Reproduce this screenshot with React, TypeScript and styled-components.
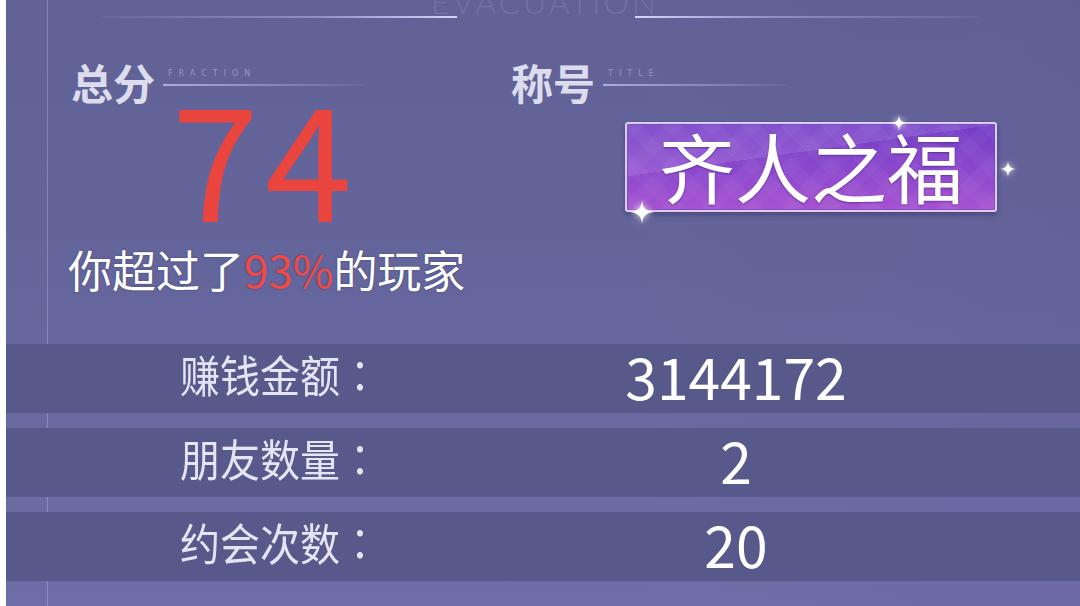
import React from "react";
import styled, { createGlobalStyle } from "styled-components";

const GlobalStyle = createGlobalStyle`
  html, body {
    margin: 0;
    padding: 0;
    background: #ffffff;
  }
  * {
    box-sizing: border-box;
  }
`;

const CJK = `"Noto Sans CJK SC", "Noto Sans", sans-serif`;

type Stat = {
  label: string;
  value: string;
};

const stats: Stat[] = [
  { label: "赚钱金额", value: "3144172" },
  { label: "朋友数量", value: "2" },
  { label: "约会次数", value: "20" },
];

const Page = styled.div`
  display: flex;
  width: 1080px;
  height: 606px;
  overflow: hidden;
  background: #ffffff;
`;

const Panel = styled.main`
  margin-left: 6px;
  flex: 1;
  display: flex;
  flex-direction: column;
  overflow: hidden;
  background:
    linear-gradient(
      90deg,
      transparent 41px,
      rgba(195, 195, 240, 0.34) 41px,
      rgba(195, 195, 240, 0.34) 42px,
      transparent 42px
    ),
    linear-gradient(90deg, rgba(255, 255, 255, 0.015) 0 60%, rgba(120, 90, 160, 0.12) 100%),
    linear-gradient(180deg, #5e5f93 0%, #62639a 45%, #6b6ca6 100%);
`;

const Header = styled.header`
  height: 30px;
  display: flex;
  align-items: flex-start;
  padding-left: 94px;
`;

const HeaderLine = styled.span<{ $side: "left" | "right" }>`
  position: relative;
  z-index: 1;
  width: ${(p) => (p.$side === "left" ? "357px" : "345px")};
  height: 2px;
  margin-top: 16px;
  background: ${(p) =>
    p.$side === "left"
      ? "linear-gradient(90deg, rgba(200, 200, 245, 0.05), rgba(200, 200, 245, 0.45) 60%, #d4d4fb)"
      : "linear-gradient(90deg, #d4d4fb, rgba(200, 200, 245, 0.45) 40%, rgba(200, 200, 245, 0.05))"};
`;

const HeaderTitle = styled.div`
  width: 234px;
  margin: -14px -27px 0 -29px;
  text-align: center;
  font-family: Lato, "Liberation Sans", sans-serif;
  font-weight: 300;
  font-size: 32px;
  line-height: 32px;
  letter-spacing: 3px;
  color: rgba(255, 255, 255, 0.13);
`;

const TopSection = styled.section`
  height: 314px;
  display: flex;
  padding: 31px 0 0 62px;
`;

const Column = styled.div<{ $width?: number; $offset?: number }>`
  display: flex;
  flex-direction: column;
  width: ${(p) => (p.$width ? `${p.$width}px` : "auto")};
  margin-left: ${(p) => p.$offset ?? 0}px;
`;

const Heading = styled.div`
  display: flex;
  align-items: flex-start;
`;

const HeadingText = styled.h2`
  margin: 0;
  padding-left: 3px;
  font-family: ${CJK};
  font-weight: 700;
  font-size: 42px;
  line-height: 42px;
  color: #dcdcee;
`;

const Tag = styled.div`
  display: flex;
  flex-direction: column;
  margin-left: 8px;
  padding-top: 8px;
`;

const TagText = styled.span`
  padding-left: 5px;
  font-family: "DejaVu Sans", sans-serif;
  font-size: 8px;
  line-height: 10px;
  letter-spacing: 6px;
  color: rgba(225, 225, 248, 0.42);
`;

const TagLine = styled.span<{ $width: number }>`
  width: ${(p) => p.$width}px;
  height: 2px;
  margin-top: 5px;
  background: linear-gradient(90deg, rgba(205, 205, 245, 0.7), rgba(205, 205, 245, 0.05));
`;

const Score = styled.div`
  padding-left: 6px;
  text-align: center;
  font-family: ${CJK};
  font-size: 157px;
  line-height: 101px;
  letter-spacing: 6px;
  color: #ea443f;
`;

const Rank = styled.p`
  margin: 39px 0 0;
  font-family: ${CJK};
  font-size: 44px;
  line-height: 52px;
  color: #ffffff;
  white-space: nowrap;
  text-shadow: 0 0 2px rgba(40, 40, 90, 0.6);
`;

const Highlight = styled.span`
  color: #ef4a46;
`;

const Badge = styled.div`
  position: relative;
  width: 372px;
  height: 90px;
  margin: 19px 0 0 117px;
  display: flex;
  align-items: center;
  justify-content: center;
  border: 2px solid #d9cdf4;
  border-radius: 3px;
  box-shadow: 0 3px 5px rgba(30, 20, 70, 0.35), inset 0 0 0 1px rgba(120, 70, 190, 0.6);
  background:
    linear-gradient(172deg, rgba(255, 255, 255, 0.1) 0 38%, rgba(255, 255, 255, 0) 38%),
    repeating-linear-gradient(45deg, rgba(255, 255, 255, 0.03) 0 14px, transparent 14px 28px),
    repeating-linear-gradient(-45deg, rgba(255, 255, 255, 0.03) 0 14px, transparent 14px 28px),
    linear-gradient(180deg, #733dc6 0%, #8947cc 50%, #a652d0 100%);
`;

const BadgeText = styled.span`
  padding-bottom: 4px;
  font-family: ${CJK};
  font-size: 76px;
  line-height: 1;
  color: #ffffff;
  text-shadow: 0 1px 2px rgba(60, 20, 110, 0.5);
`;

const Sparkle = styled.svg<{ $x: number; $y: number; $size: number }>`
  position: absolute;
  left: ${(p) => p.$x - p.$size / 2}px;
  top: ${(p) => p.$y - p.$size / 2}px;
  width: ${(p) => p.$size}px;
  height: ${(p) => p.$size}px;
  filter: drop-shadow(0 0 3px rgba(255, 255, 255, 0.9));
`;

const StatList = styled.section`
  display: flex;
  flex-direction: column;
  gap: 15px;
`;

const StatRow = styled.div`
  height: 69px;
  display: grid;
  grid-template-columns: 374px 1fr;
  align-items: center;
  background: #58598b;
`;

const StatLabel = styled.span`
  padding-bottom: 8px;
  text-align: right;
  font-family: ${CJK};
  font-size: 40px;
  line-height: 1;
  color: #e4e4f2;
  transform: scaleY(1.1);
`;

const Colon = styled.span`
  font-family: "Noto Sans CJK TC", sans-serif;
`;

const StatValue = styled.span`
  padding: 0 0 7px 12px;
  text-align: center;
  font-family: ${CJK};
  font-size: 57px;
  line-height: 1;
  color: #ffffff;
`;

const StarShape = (props: { x: number; y: number; size: number }) => (
  <Sparkle $x={props.x} $y={props.y} $size={props.size} viewBox="0 0 24 24">
    <path
      d="M12 0 C12.8 8 15.5 11 24 12 C15.5 13 12.8 16 12 24 C11.2 16 8.5 13 0 12 C8.5 11 11.2 8 12 0 Z"
      fill="#ffffff"
    />
  </Sparkle>
);

export default function App() {
  return (
    <Page>
      <GlobalStyle />
      <Panel>
        <Header>
          <HeaderLine $side="left" />
          <HeaderTitle>EVACUATION</HeaderTitle>
          <HeaderLine $side="right" />
        </Header>

        <TopSection>
          <Column $width={388}>
            <Heading>
              <HeadingText>总分</HeadingText>
              <Tag>
                <TagText>FRACTION</TagText>
                <TagLine $width={200} />
              </Tag>
            </Heading>
            <Score>74</Score>
            <Rank>
              你超过了<Highlight>93%</Highlight>的玩家
            </Rank>
          </Column>

          <Column $offset={52}>
            <Heading>
              <HeadingText>称号</HeadingText>
              <Tag>
                <TagText>TITLE</TagText>
                <TagLine $width={185} />
              </Tag>
            </Heading>
            <Badge>
              <BadgeText>齐人之福</BadgeText>
              <StarShape x={272} y={-1} size={16} />
              <StarShape x={381} y={45} size={16} />
              <StarShape x={15} y={88} size={24} />
            </Badge>
          </Column>
        </TopSection>

        <StatList>
          {stats.map((s) => (
            <StatRow key={s.label}>
              <StatLabel>
                {s.label}
                <Colon>：</Colon>
              </StatLabel>
              <StatValue>{s.value}</StatValue>
            </StatRow>
          ))}
        </StatList>
      </Panel>
    </Page>
  );
}
